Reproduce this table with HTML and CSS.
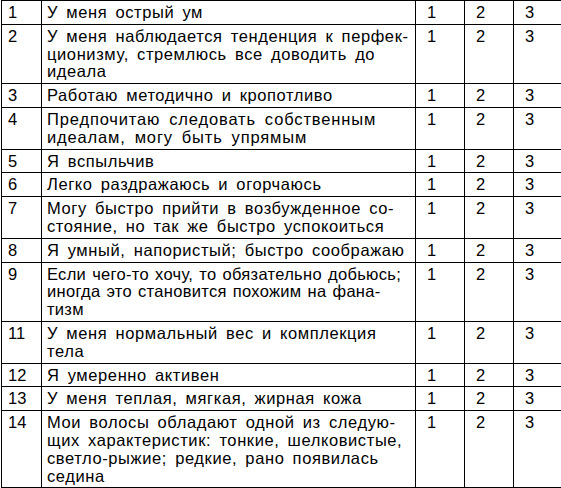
FILE: index.html
```html
<!DOCTYPE html>
<html lang="ru">
<head>
<meta charset="utf-8">
<link rel="stylesheet" href="styles.css">
</head>
<body>
<table class="grid">
  <colgroup>
    <col class="c-num"><col class="c-text"><col class="c-opt"><col class="c-opt"><col class="c-opt3">
  </colgroup>
  <tbody>
    <tr><td>1</td><td>У меня острый ум</td><td>1</td><td>2</td><td>3</td></tr>
    <tr><td>2</td><td>У меня наблюдается тенденция к перфек-<br>ционизму, стремлюсь все доводить до<br>идеала</td><td>1</td><td>2</td><td>3</td></tr>
    <tr><td>3</td><td>Работаю методично и кропотливо</td><td>1</td><td>2</td><td>3</td></tr>
    <tr><td>4</td><td class="wide">Предпочитаю следовать собственным<br>идеалам, могу быть упрямым</td><td>1</td><td>2</td><td>3</td></tr>
    <tr><td>5</td><td>Я вспыльчив</td><td>1</td><td>2</td><td>3</td></tr>
    <tr><td>6</td><td>Легко раздражаюсь и огорчаюсь</td><td>1</td><td>2</td><td>3</td></tr>
    <tr><td>7</td><td>Могу быстро прийти в возбужденное со-<br>стояние, но так же быстро успокоиться</td><td>1</td><td>2</td><td>3</td></tr>
    <tr><td>8</td><td>Я умный, напористый; быстро соображаю</td><td>1</td><td>2</td><td>3</td></tr>
    <tr><td>9</td><td class="tight">Если чего-то хочу, то обязательно добьюсь;<br>иногда это становится похожим на фана-<br>тизм</td><td>1</td><td>2</td><td>3</td></tr>
    <tr><td>11</td><td>У меня нормальный вес и комплекция<br>тела</td><td>1</td><td>2</td><td>3</td></tr>
    <tr><td>12</td><td>Я умеренно активен</td><td>1</td><td>2</td><td>3</td></tr>
    <tr><td>13</td><td>У меня теплая, мягкая, жирная кожа</td><td>1</td><td>2</td><td>3</td></tr>
    <tr><td>14</td><td>Мои волосы обладают одной из следую-<br>щих характеристик: тонкие, шелковистые,<br>светло-рыжие; редкие, рано появилась<br>седина</td><td>1</td><td>2</td><td>3</td></tr>
  </tbody>
</table>
</body>
</html>
```

FILE: styles.css
```css
html, body {
  margin: 0;
  padding: 0;
  background: #fff;
}
.grid {
  border-collapse: collapse;
  table-layout: fixed;
  width: 560px;
  margin: 0 0 0 1px;
  font-family: "Liberation Sans", Arial, sans-serif;
  font-size: 16.5px;
  line-height: 17.8px;
  color: #000;
}
.c-num { width: 40px; }
.c-text { width: 374px; }
.c-opt { width: 49px; }
.c-opt3 { width: 48px; }
.grid td {
  border: 1px solid #000;
  padding: 3px 2px 2px 5px;
  vertical-align: top;
  white-space: nowrap;
  overflow: hidden;
}
.grid td:first-child {
  padding-left: 6px;
}
.grid td:nth-child(2) {
  padding-left: 5px;
  letter-spacing: 0.6px;
  word-spacing: 3px;
}
.grid td.wide {
  letter-spacing: 0.85px;
  word-spacing: 3.5px;
}
.grid td.tight {
  letter-spacing: 0.3px;
  word-spacing: 1.2px;
}
.grid td:nth-child(n+3) {
  padding-left: 11px;
}
```
